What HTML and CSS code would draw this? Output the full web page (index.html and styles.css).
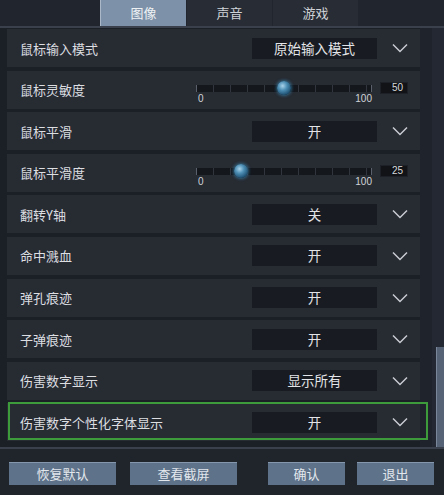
FILE: index.html
```html
<!DOCTYPE html>
<html lang="zh-CN">
<head>
<meta charset="utf-8">
<title>设置</title>
<link rel="stylesheet" href="styles.css">
</head>
<body>
<div class="app">
  <header class="header">
    <nav class="tabs">
      <div class="tab active">图像</div>
      <div class="tab">声音</div>
      <div class="tab">游戏</div>
    </nav>
  </header>
  <main class="main">
    <section class="list">
      <div class="row">
        <span class="label">鼠标输入模式</span>
        <div class="select">原始输入模式</div>
        <div class="chev"><svg width="16" height="10" viewBox="0 0 16 10"><path d="M1 1.5 L8 8.5 L15 1.5" fill="none" stroke="#c9cdd3" stroke-width="1.5"/></svg></div>
      </div>
      <div class="row slider-row">
        <span class="label">鼠标灵敏度</span>
        <div class="slider">
          <div class="track"><span class="thumb" style="left:50%"></span></div>
          <div class="scale"><span>0</span><span>100</span></div>
        </div>
        <div class="value">50</div>
      </div>
      <div class="row">
        <span class="label">鼠标平滑</span>
        <div class="select">开</div>
        <div class="chev"><svg width="16" height="10" viewBox="0 0 16 10"><path d="M1 1.5 L8 8.5 L15 1.5" fill="none" stroke="#c9cdd3" stroke-width="1.5"/></svg></div>
      </div>
      <div class="row slider-row">
        <span class="label">鼠标平滑度</span>
        <div class="slider">
          <div class="track"><span class="thumb" style="left:25%"></span></div>
          <div class="scale"><span>0</span><span>100</span></div>
        </div>
        <div class="value">25</div>
      </div>
      <div class="row">
        <span class="label">翻转Y轴</span>
        <div class="select">关</div>
        <div class="chev"><svg width="16" height="10" viewBox="0 0 16 10"><path d="M1 1.5 L8 8.5 L15 1.5" fill="none" stroke="#c9cdd3" stroke-width="1.5"/></svg></div>
      </div>
      <div class="row">
        <span class="label">命中溅血</span>
        <div class="select">开</div>
        <div class="chev"><svg width="16" height="10" viewBox="0 0 16 10"><path d="M1 1.5 L8 8.5 L15 1.5" fill="none" stroke="#c9cdd3" stroke-width="1.5"/></svg></div>
      </div>
      <div class="row">
        <span class="label">弹孔痕迹</span>
        <div class="select">开</div>
        <div class="chev"><svg width="16" height="10" viewBox="0 0 16 10"><path d="M1 1.5 L8 8.5 L15 1.5" fill="none" stroke="#c9cdd3" stroke-width="1.5"/></svg></div>
      </div>
      <div class="row">
        <span class="label">子弹痕迹</span>
        <div class="select">开</div>
        <div class="chev"><svg width="16" height="10" viewBox="0 0 16 10"><path d="M1 1.5 L8 8.5 L15 1.5" fill="none" stroke="#c9cdd3" stroke-width="1.5"/></svg></div>
      </div>
      <div class="row">
        <span class="label">伤害数字显示</span>
        <div class="select">显示所有</div>
        <div class="chev"><svg width="16" height="10" viewBox="0 0 16 10"><path d="M1 1.5 L8 8.5 L15 1.5" fill="none" stroke="#c9cdd3" stroke-width="1.5"/></svg></div>
      </div>
      <div class="row selected">
        <span class="label">伤害数字个性化字体显示</span>
        <div class="select">开</div>
        <div class="chev"><svg width="16" height="10" viewBox="0 0 16 10"><path d="M1 1.5 L8 8.5 L15 1.5" fill="none" stroke="#c9cdd3" stroke-width="1.5"/></svg></div>
      </div>
    </section>
    <aside class="scrollbar">
      <div class="scroll-thumb"></div>
    </aside>
  </main>
  <footer class="footer">
    <button class="btn btn-wide">恢复默认</button>
    <button class="btn btn-wide btn-gap1">查看截屏</button>
    <button class="btn btn-narrow btn-gap2">确认</button>
    <button class="btn btn-narrow btn-gap3">退出</button>
  </footer>
</div>
</body>
</html>
```

FILE: styles.css
```css
* { box-sizing: border-box; }

html, body {
  margin: 0;
  padding: 0;
  background: #1c2027;
}

body {
  width: 444px;
  height: 495px;
  overflow: hidden;
  font-family: "Noto Sans CJK SC", "Noto Sans", sans-serif;
  color: #d9dbde;
}

.app {
  display: flex;
  flex-direction: column;
  width: 444px;
  height: 495px;
}

/* header tabs */
.header {
  height: 28px;
  background: #21252d;
  border-bottom: 2px solid #3a414d;
  flex: none;
}

.tabs {
  display: flex;
  padding-left: 100px;
  gap: 1px;
  height: 26px;
}

.tab {
  width: 85px;
  height: 26px;
  background: #282c34;
  color: #cfd3d8;
  font-size: 13px;
  line-height: 26px;
  text-align: center;
}

.tab.active {
  width: 86px;
  background: #7d91a8;
  color: #eef1f4;
  border-left: 1px solid #aab8c8;
}

/* main list */
.main {
  flex: none;
  height: 419px;
  display: flex;
  background: #1b1f26;
}

.list {
  width: 420px;
  padding: 1px 0 0 7px;
  display: flex;
  flex-direction: column;
  gap: 3.6px;
}

.row {
  height: 38px;
  flex: none;
  display: flex;
  align-items: center;
  background: #272b32;
  position: relative;
}

.row.selected::after {
  content: "";
  position: absolute;
  top: -1px;
  bottom: 1px;
  left: 1px;
  right: -8px;
  border: 2px solid #3e9b3b;
  pointer-events: none;
}

.label {
  flex: 1;
  padding-left: 13px;
  font-size: 13px;
  color: #dcdee1;
  white-space: nowrap;
}

.select {
  width: 125px;
  height: 21px;
  background: #181b21;
  font-size: 13.5px;
  line-height: 21px;
  text-align: center;
  color: #e2e4e7;
}

.chev {
  width: 43px;
  display: flex;
  justify-content: center;
  padding-left: 3px;
}

.chev svg { display: block; }

/* sliders */
.slider-row {
  align-items: flex-start;
}

.slider-row .label {
  align-self: center;
}

.slider {
  width: 176px;
  margin-top: 14px;
}

.track {
  position: relative;
  height: 7px;
  background:
    repeating-linear-gradient(90deg, transparent 0, transparent 16px, #30353e 16px, #30353e 17px),
    #14171c;
  border-left: 1px solid #5a616c;
  border-right: 1px solid #5a616c;
}

.thumb {
  position: absolute;
  top: 50%;
  width: 14px;
  height: 14px;
  margin: -7px 0 0 -7px;
  border-radius: 50%;
  background: radial-gradient(circle at 40% 35%, #a9d3ea 0, #4e8fb5 35%, #1c4d6e 75%, #123247 100%);
  box-shadow: 0 0 3px 1px rgba(60, 150, 200, 0.55);
}

.scale {
  display: flex;
  justify-content: space-between;
  font-family: "Liberation Sans", Arial, sans-serif;
  font-size: 10px;
  line-height: 11px;
  color: #d0d3d7;
  padding: 1px 0 0 2px;
}

.value {
  width: 28px;
  height: 12px;
  margin: 11px 12px 0 8px;
  background: #111317;
  border: 1px solid #1d2026;
  font-family: "Liberation Sans", Arial, sans-serif;
  font-size: 10px;
  line-height: 10px;
  text-align: right;
  padding-right: 4px;
  color: #d6d9dc;
}

/* scrollbar */
.scrollbar {
  width: 24px;
  display: flex;
  flex-direction: column;
  align-items: flex-end;
  background: linear-gradient(90deg, #1f232b 0, #1f232b 12px, #232832 12px);
}

.scroll-thumb {
  width: 8px;
  height: 105px;
  margin-top: 319px;
  background: #566276;
  border-left: 1px solid #7a8699;
}

/* footer */
.footer {
  flex: 1;
  display: flex;
  align-items: flex-start;
  padding: 13px 0 0 9px;
  background: #20242b;
  border-top: 2px solid #3a414d;
}

.btn {
  height: 23px;
  padding: 0;
  border: none;
  border-top: 1px solid #8497ad;
  background: #5e7289;
  color: #e2e7ed;
  font-family: "Noto Sans CJK SC", sans-serif;
  font-size: 13px;
  line-height: 22px;
  text-align: center;
}

.btn-wide { width: 107px; }
.btn-narrow { width: 77px; }
.btn-gap1 { margin-left: 14px; }
.btn-gap2 { margin-left: 31px; }
.btn-gap3 { margin-left: 12px; }
```
